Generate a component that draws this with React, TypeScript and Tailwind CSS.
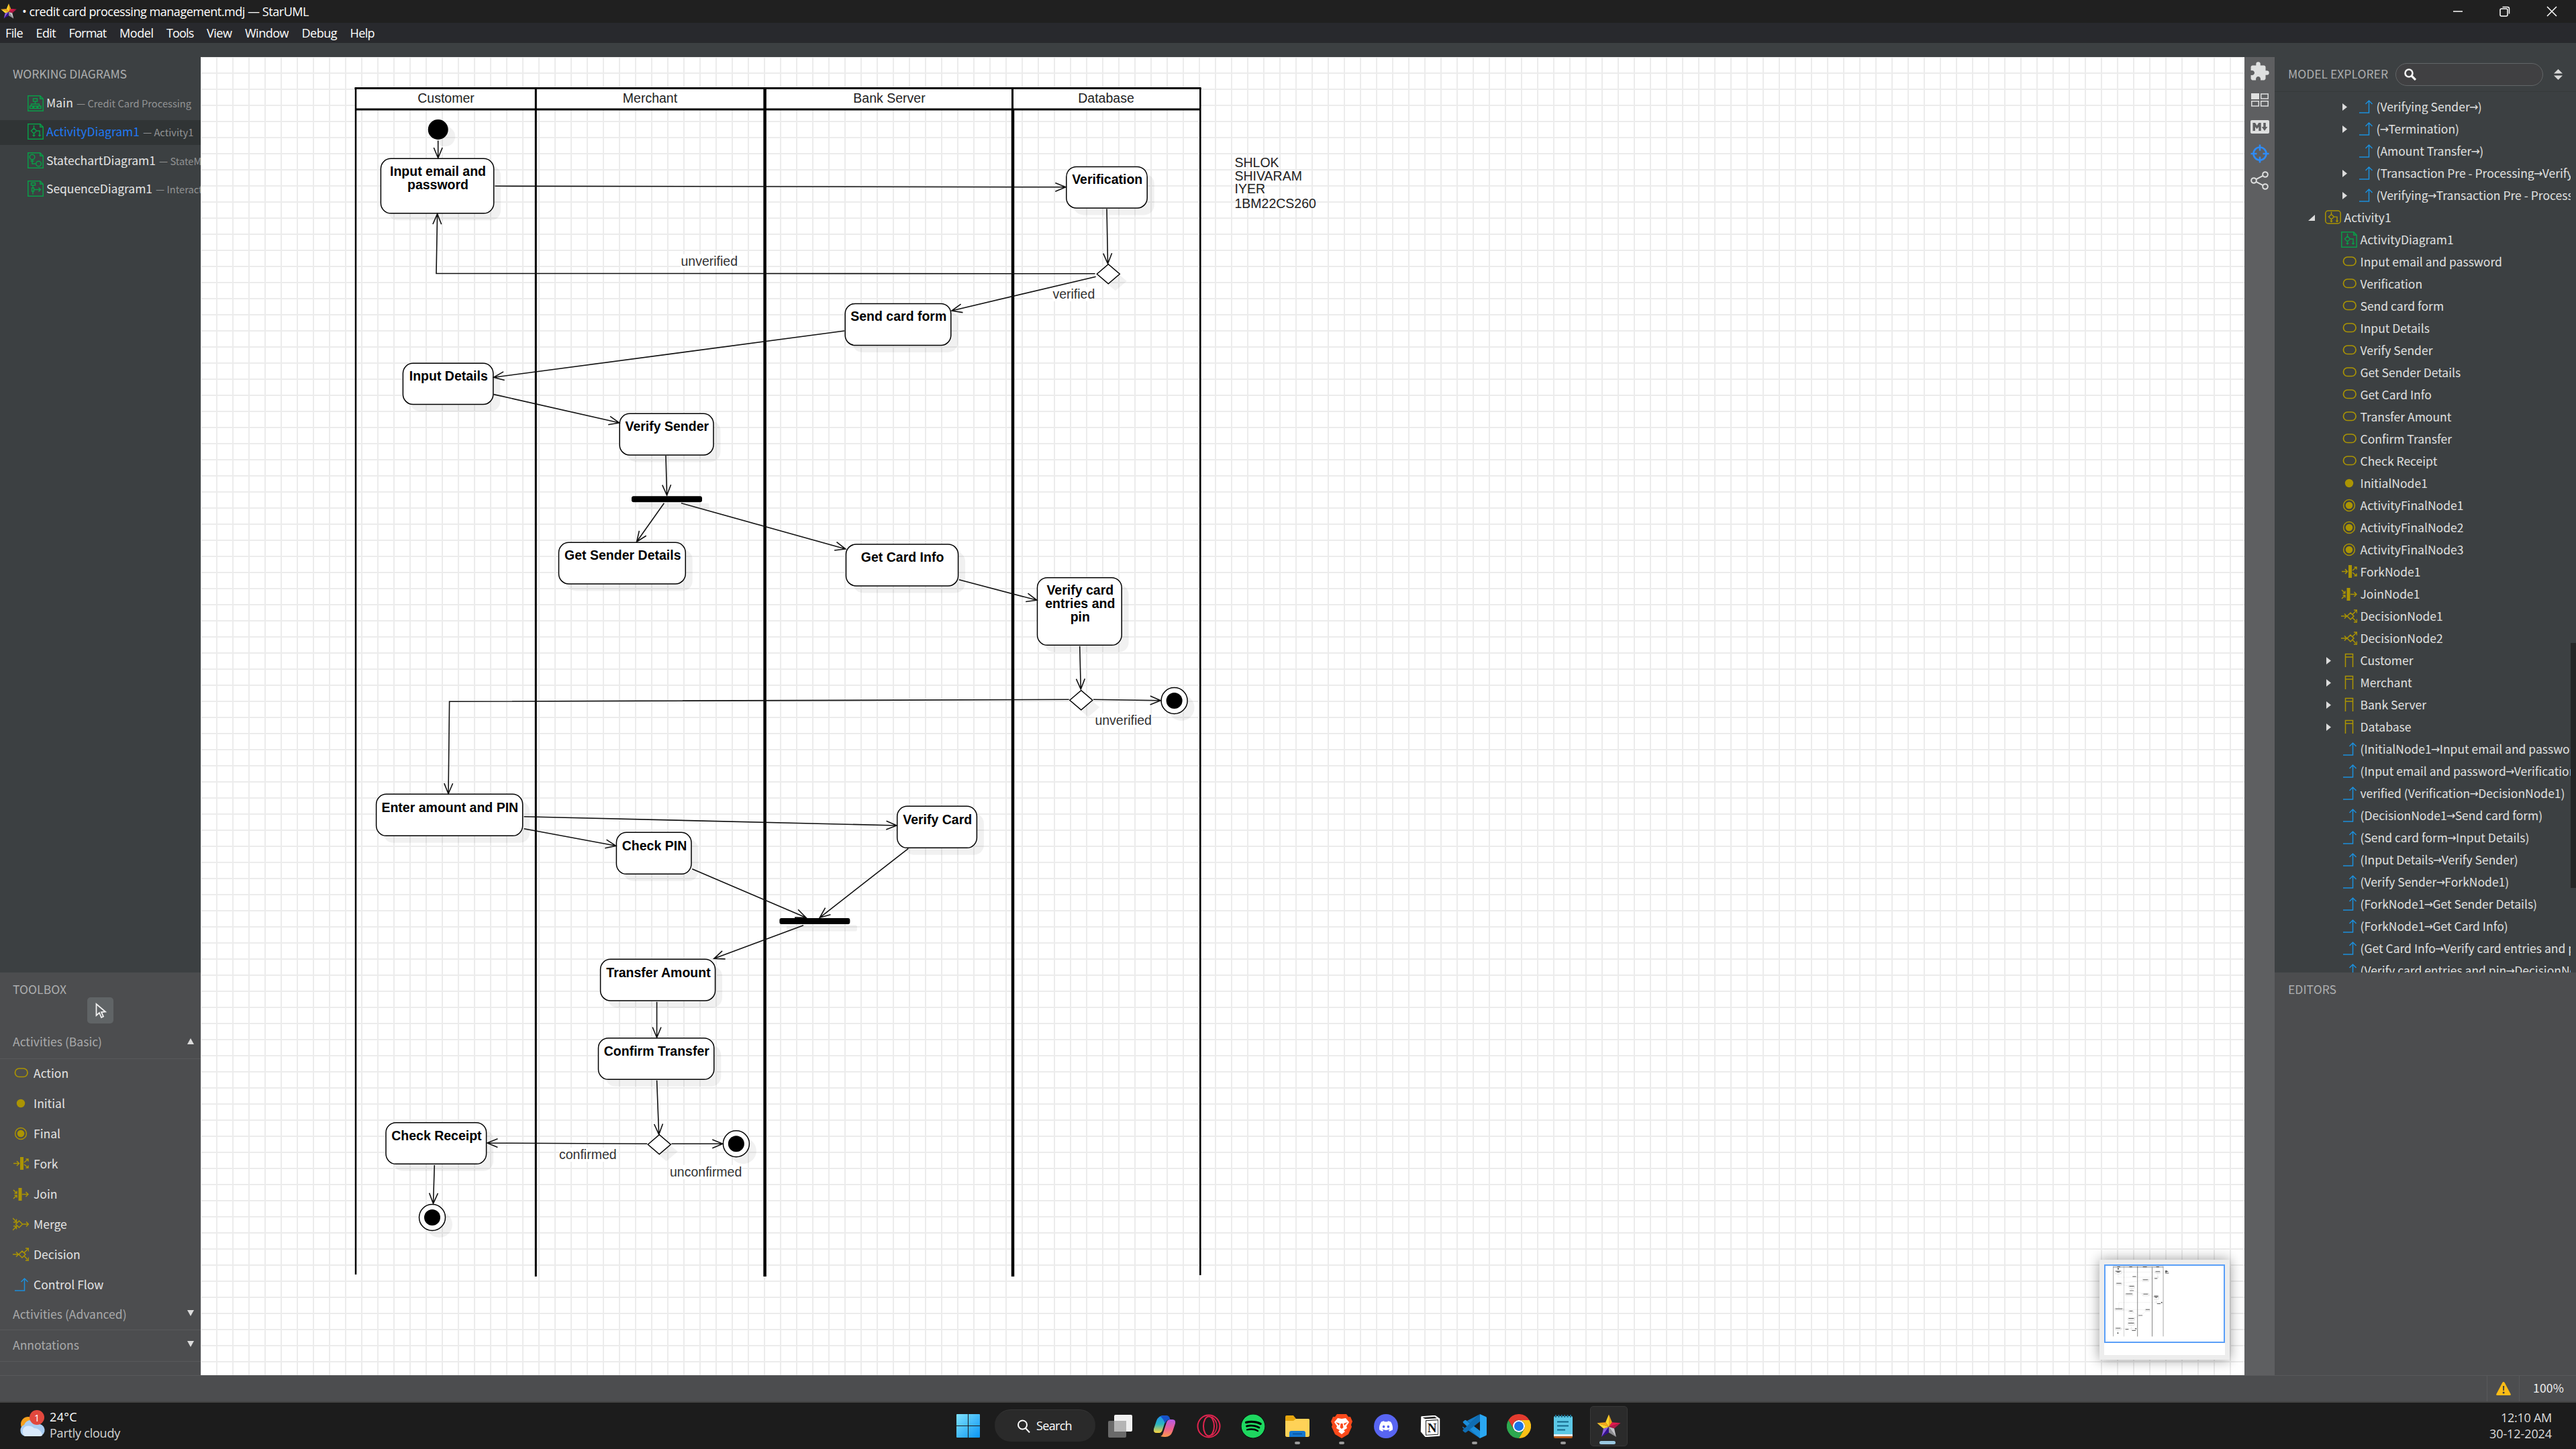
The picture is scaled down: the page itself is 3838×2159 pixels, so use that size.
import React, { useLayoutEffect, useRef, useState } from "react";
import { MdExtension } from "react-icons/md";
import { IoLogoMarkdown } from "react-icons/io";
import { FaDiscord, FaSpotify } from "react-icons/fa";

/* Text stretched to a fixed advance width through its letter spacing. */
function Fit({ w, children, className = "" }: { w: number; children: string; className?: string }) {
  const ref = useRef<HTMLSpanElement>(null);
  const [spacing, setSpacing] = useState(0);
  useLayoutEffect(() => {
    if (ref.current) setSpacing((w - ref.current.getBoundingClientRect().width) / children.length);
  }, [w, children]);
  return (
    <span ref={ref} className={"inline-block shrink-0 whitespace-nowrap " + className} style={{ letterSpacing: `${spacing}px` }}>
      {children}
    </span>
  );
}

const GOLD = "#ab9403";
const GREEN = "#0a9c48";
const BLUE = "#1b8fdc";

function ActivityGlyph() {
  return (
    <g fill="none" stroke="currentColor" strokeWidth="1.5">
      <path d="M9.5 3v4M9.5 7l4 4-4 4-4-4zM13.5 11h4.5v7M9.5 15v4" />
      <path d="M7 17h5l-2.500 3zM15.500 17h5l-2.500 3z" fill="currentColor" stroke="none" />
    </g>
  );
}

function Icon({ kind }: { kind: string }) {
  const line = { fill: "none", stroke: "currentColor", strokeWidth: 1.5 };
  const doc = <path d="M.8 .8h18l4.400 4.400v18H.8zM18.800 .8v4.400h4.400" {...line} />;
  let color = GOLD;
  let body: React.ReactNode = null;
  switch (kind) {
    case "class":
      color = GREEN;
      body = (
        <>
          {doc}
          <path d="M8.500 5h6v4h-6zM11.500 9v4M5.500 16v-3h12v3M3.500 16h4.500v3.500H3.500zM9.500 16H14v3.500H9.500zM15.500 16H20v3.500h-4.500z" {...line} />
        </>
      );
      break;
    case "activity":
      color = GREEN;
      body = (
        <>
          {doc}
          <ActivityGlyph />
        </>
      );
      break;
    case "state":
      color = GREEN;
      body = (
        <>
          {doc}
          <circle cx="7" cy="7" r="3.800" {...line} />
          <circle cx="16.500" cy="17" r="3.800" {...line} />
          <path d="M7 11v6h5.500M4.500 13h5" {...line} />
        </>
      );
      break;
    case "sequence":
      color = GREEN;
      body = (
        <>
          {doc}
          <path d="M5.500 3.500h6V7h-6zM8 7v4M6.500 11h3v5h-3zM8 16v4.500M9.500 13.500h10M16.500 10.500l3 3-3 3" {...line} />
        </>
      );
      break;
    case "activityRoot":
      body = (
        <>
          <rect x=".8" y="2" width="22.400" height="19" rx="4" {...line} />
          <g transform="translate(0 1) scale(1 .92)">
            <ActivityGlyph />
          </g>
        </>
      );
      break;
    case "action":
      body = <rect x="3.500" y="5" width="18.500" height="12.500" rx="6" {...line} strokeWidth={1.700} />;
      break;
    case "initial":
      body = <circle cx="12" cy="12" r="6.200" fill="currentColor" />;
      break;
    case "final":
      body = (
        <>
          <circle cx="12" cy="12" r="8.400" {...line} />
          <circle cx="12" cy="12" r="5.300" fill="currentColor" />
        </>
      );
      break;
    case "fork":
      body = (
        <>
          <rect x="11" y="2" width="5" height="19" fill="currentColor" />
          <path d="M1 11.500h8.500M6 8l3.500 3.500L6 15M17 10l6-5M19.500 5H23v3.500M17 13l6 5M19.500 18H23v-3.500" {...line} />
        </>
      );
      break;
    case "join":
      body = (
        <>
          <rect x="8.500" y="3" width="5" height="19" fill="currentColor" />
          <path d="M14 12.500h9M19.500 9l3.500 3.500-3.500 3.500M1 6l5 5M6 7.500V11H2.500M1 19l5-5M2.500 14H6v3.500" {...line} />
        </>
      );
      break;
    case "merge":
      body = <path d="M4.500 12l5-5 5 5-5 5zM14.500 12h9M20 8.500l3.500 3.500-3.500 3.500M0 3l6 6M5.500 4.500V9H1M0 21l6-6M1 15h4.500v4.500" {...line} />;
      break;
    case "decision":
      body = <path d="M9 12l5-5 5 5-5 5zM0 12h8.500M5 8.500L8.500 12 5 15.500M17 9.500l6.500-6.500M19 3h4.500v4.500M17 14.500l6.500 6.500M19 21h4.500v-4.500" {...line} />;
      break;
    case "lane":
      body = <path d="M6.500 22V2.500h11V22M6.500 7h11" {...line} />;
      break;
    case "flow":
      color = BLUE;
      body = <path d="M3 21h14.500V3.500M12.500 8l5-5 5 5" {...line} />;
      break;
  }
  return (
    <svg viewBox="0 0 24 24" className="size-6 shrink-0" style={{ color }}>
      {body}
    </svg>
  );
}

function StarLogo({ className }: { className: string }) {
  function pt(deg: number, r: number) {
    const a = (deg * Math.PI) / 180;
    return `${(18 + r * Math.sin(a)).toFixed(1)},${(19 - r * Math.cos(a)).toFixed(1)}`;
  }
  const outer = [0, 1, 2, 3, 4].map((i) => pt(i * 72, 18.5));
  const inner = [0, 1, 2, 3, 4].map((i) => pt(i * 72 + 36, 8.4));
  const right = ["#e8a21c", "#b01c48", "#8e8e92", "#8a5ce0", "#f9a81c"];
  const left = ["#fed62a", "#e3174f", "#c4c4c8", "#34108c", "#fdd835"];
  return (
    <svg viewBox="0 0 36 36" className={className}>
      {outer.map((o, i) => (
        <g key={i}>
          <polygon points={`18,19 ${o} ${inner[i]}`} fill={right[i]} />
          <polygon points={`18,19 ${o} ${inner[(i + 4) % 5]}`} fill={left[i]} />
        </g>
      ))}
    </svg>
  );
}

/* ---------- Title and menu bars ---------- */

function TitleBar() {
  return (
    <div className="flex h-[34px] shrink-0 items-center bg-[#202020] font-['Open_Sans',sans-serif] text-[18px] text-white">
      <StarLogo className="ml-px size-6" />
      <Fit w={427} className="ml-[8px]">• credit card processing management.mdj — StarUML</Fit>
      <div className="ml-auto flex items-center gap-[54px] pr-[28px]">
        <svg viewBox="0 0 16 16" className="size-4" stroke="#fff" strokeWidth="1.5" fill="none">
          <path d="M1 8h14" />
        </svg>
        <svg viewBox="0 0 16 16" className="size-4" stroke="#fff" strokeWidth="1.5" fill="none">
          <rect x="1" y="4" width="11" height="11" rx="2" />
          <path d="M4.500 1.500H12q2.500 0 2.500 2.500v7.500" />
        </svg>
        <svg viewBox="0 0 16 16" className="size-4" stroke="#fff" strokeWidth="1.5" fill="none">
          <path d="M1 1l14 14M15 1L1 15" />
        </svg>
      </div>
    </div>
  );
}

const MENUS: [string, number][] = [
  ["File", 26], ["Edit", 29.5], ["Format", 56], ["Model", 50.500], ["Tools", 40.500],
  ["View", 37.500], ["Window", 65], ["Debug", 52.500], ["Help", 36.500],
];

function MenuBar() {
  return (
    <div className="flex h-[30px] shrink-0 items-center gap-[19.5px] bg-[#28292d] pb-px pl-[8px] font-['Open_Sans',sans-serif] text-[18px] leading-none text-white">
      {MENUS.map(([m, w]) => (
        <Fit key={m} w={w}>{m}</Fit>
      ))}
    </div>
  );
}

/* ---------- Left side ---------- */

const DIAGRAMS = [
  { kind: "class", name: "Main", w: 40, owner: "— Credit Card Processing" },
  { kind: "activity", name: "ActivityDiagram1", w: 139, owner: "— Activity1", active: true },
  { kind: "state", name: "StatechartDiagram1", w: 163, owner: "— StateMachine1" },
  { kind: "sequence", name: "SequenceDiagram1", w: 158, owner: "— Interaction1" },
];

function WorkingDiagrams() {
  return (
    <div className="h-[1364px] shrink-0 overflow-hidden bg-[#3c4042]">
      <div className="flex h-[51px] items-center pl-[19px] text-[17.5px] text-[#adaeaf]">
        <Fit w={170}>WORKING DIAGRAMS</Fit>
      </div>
      <div className="flex flex-col gap-[5.6px]">
        {DIAGRAMS.map((d) => (
          <div
            key={d.name}
            className={
              "flex h-[37px] items-center overflow-hidden pb-[2px] pl-[41px] whitespace-nowrap " +
              (d.active ? "bg-[#303435] text-[#2079f4]" : "text-[#e4e4e4]")
            }
          >
            <Icon kind={d.kind} />
            <Fit w={d.w} className="ml-[4px]">{d.name}</Fit>
            <span className="ml-[5px] pt-[2px] text-[14.700px] text-[#929394]">{d.owner}</span>
          </div>
        ))}
      </div>
    </div>
  );
}

const TOOLS = [
  ["action", "Action"], ["initial", "Initial"], ["final", "Final"], ["fork", "Fork"],
  ["join", "Join"], ["merge", "Merge"], ["decision", "Decision"], ["flow", "Control Flow"],
];

function ToolGroup({ title, open, className }: { title: string; open?: boolean; className: string }) {
  return (
    <div className={"flex shrink-0 items-center justify-between border-b border-[#58595b] pr-[10px] pb-[2px] pl-[19px] text-[#a9aaab] " + className}>
      <span>{title}</span>
      <svg viewBox="0 0 10 9" className="mb-[3px] h-[9px] w-[10px]" fill="#dcdcdc">
        <path d={open ? "M0 9L5 0l5 9z" : "M0 0l5 9 5-9z"} />
      </svg>
    </div>
  );
}

function Toolbox() {
  return (
    <div className="flex flex-1 flex-col bg-[#4c4d4f] text-[17.5px]">
      <div className="flex h-[37px] shrink-0 items-center pt-[13px] pl-[19px] text-[#adaeaf]">
        <Fit w={80}>TOOLBOX</Fit>
      </div>
      <div className="mx-auto flex h-[39px] w-[39px] shrink-0 items-center justify-center rounded-[5px] bg-[#606466]">
        <svg viewBox="0 0 18 24" className="h-6 w-[18px]" fill="none" stroke="#efefef" strokeWidth="1.800">
          <path d="M2.500 2v17l4.500-4 3 7 3-1.500-3-6.500 6-.5z" />
        </svg>
      </div>
      <ToolGroup title="Activities (Basic)" open className="mt-[5px] h-[48px]" />
      {TOOLS.map(([kind, label]) => (
        <div key={label} className="flex h-[44.9px] shrink-0 items-center gap-[7px] pb-[2px] pl-[19px] text-[#e4e4e4]">
          <Icon kind={kind} />
          <span>{label}</span>
        </div>
      ))}
      <ToolGroup title="Activities (Advanced)" className="h-[45px]" />
      <ToolGroup title="Annotations" className="h-[47px]" />
    </div>
  );
}

/* ---------- Diagram ---------- */

type Box = { x1: number; y1: number; x2: number; y2: number; cx: number; lines: [string, number][] };
const BOXES: Box[] = [
  { x1: 567.4, y1: 236.3, x2: 735.7, y2: 317.8, cx: 652.5, lines: [["Input email and", 262], ["password", 281.8]] },
  { x1: 600.4, y1: 541.3, x2: 734.8, y2: 602.5, cx: 668.3, lines: [["Input Details", 567]] },
  { x1: 923.2, y1: 616.3, x2: 1063, y2: 678, cx: 993.8, lines: [["Verify Sender", 642]] },
  { x1: 1588.8, y1: 248.4, x2: 1709.2, y2: 310, cx: 1649.7, lines: [["Verification", 274.3]] },
  { x1: 1259.2, y1: 452.4, x2: 1416.8, y2: 514.5, cx: 1338.8, lines: [["Send card form", 478.3]] },
  { x1: 832.5, y1: 808.3, x2: 1021.3, y2: 870, cx: 927.8, lines: [["Get Sender Details", 834.3]] },
  { x1: 1260.5, y1: 811, x2: 1427.6, y2: 873, cx: 1344.6, lines: [["Get Card Info", 837.3]] },
  { x1: 1545.5, y1: 860.7, x2: 1671.2, y2: 961.3, cx: 1609.3, lines: [["Verify card", 886.3], ["entries and", 906], ["pin", 925.5]] },
  { x1: 560.6, y1: 1183.3, x2: 778.7, y2: 1245.3, cx: 670.3, lines: [["Enter amount and PIN", 1209.7]] },
  { x1: 1336.7, y1: 1201.3, x2: 1455.4, y2: 1263.3, cx: 1396.7, lines: [["Verify Card", 1228]] },
  { x1: 918.4, y1: 1240.3, x2: 1030, y2: 1302.3, cx: 975, lines: [["Check PIN", 1266.7]] },
  { x1: 894.6, y1: 1429.3, x2: 1065.6, y2: 1491, cx: 981, lines: [["Transfer Amount", 1455.7]] },
  { x1: 891.5, y1: 1546.7, x2: 1063.8, y2: 1608.3, cx: 978.3, lines: [["Confirm Transfer", 1572.7]] },
  { x1: 575, y1: 1672.7, x2: 724.6, y2: 1734.3, cx: 650.4, lines: [["Check Receipt", 1699]] },
];

const FLOWS: [number, number][][] = [
  [[652.7, 209.5], [652.7, 235.5]],
  [[737.5, 277.3], [1587.8, 278.8]],
  [[1631.6, 407.8], [650, 407.4], [651.6, 318.6]],
  [[1649, 311.3], [1650.5, 393]],
  [[1632.7, 412.2], [1417.9, 463]],
  [[1258.2, 493], [735.5, 562.3]],
  [[735.5, 587.6], [922.8, 630]],
  [[992, 679], [993.6, 738]],
  [[989.4, 749.7], [948.6, 807.3]],
  [[1015, 749.7], [1259.8, 818]],
  [[1428.8, 863.7], [1544.9, 894.3]],
  [[1608.7, 962.7], [1610.3, 1027]],
  [[1629, 1042.3], [1729.2, 1043.7]],
  [[1592.7, 1042.3], [669.6, 1045.3], [668, 1182.7]],
  [[780.6, 1216.7], [1336, 1230]],
  [[780.6, 1234.7], [917.7, 1260.3]],
  [[1031.3, 1294.7], [1200.9, 1367.3]],
  [[1353.3, 1264.3], [1221.3, 1367.3]],
  [[1197, 1378.7], [1063.8, 1428.3]],
  [[978.6, 1492.7], [978.6, 1546]],
  [[978.6, 1609.7], [981.7, 1690.3]],
  [[1000.4, 1704.3], [1076.8, 1704.3]],
  [[964.3, 1704.3], [725.9, 1703]],
  [[647.3, 1736], [645.5, 1793.3]],
];

const LABELS: [string, number, number, number][] = [
  ["unverified", 1014.5, 395.9, 84],
  ["verified", 1568.4, 444.8, 62],
  ["unverified", 1631.4, 1080.3, 84],
  ["confirmed", 833, 1727, 86],
  ["unconfirmed", 998, 1753, 107],
];

const LANES: [string, number][] = [["Customer", 664.5], ["Merchant", 968.5], ["Bank Server", 1325], ["Database", 1648]];
const NOTE: [string, number][] = [["SHLOK", 249.3], ["SHIVARAM", 268.7], ["IYER", 288.3], ["1BM22CS260", 310]];
const DIAMONDS: [number, number][] = [[1651.3, 408.2], [1610.8, 1043.2], [982.3, 1705.2]];
const FINALS: [number, number][] = [[1749.6, 1044], [1096.9, 1704.3], [644, 1814]];
const BARS: [number, number][] = [[941, 739.3], [1161.4, 1368]];

function arrowPath(pts: [number, number][]) {
  const [x, y] = pts[pts.length - 1];
  const [px, py] = pts[pts.length - 2];
  const a = Math.atan2(y - py, x - px);
  const wing = (d: number) => `${(x - 16.8 * Math.cos(a + d)).toFixed(1)} ${(y - 16.8 * Math.sin(a + d)).toFixed(1)}`;
  return `M${pts.map((p) => p.join(" ")).join("L")}M${wing(0.39)}L${x} ${y}L${wing(-0.39)}`;
}

function Words({ x, y, text, mini, bold, middle, fill = "#000" }: { x: number; y: number; text: string; mini?: boolean; bold?: boolean; middle?: boolean; fill?: string }) {
  if (mini) {
    const w = text.length * 9;
    return <rect x={middle ? x - w / 2 : x} y={y - 12} width={w} height={13} fill="#222" />;
  }
  return (
    <text x={x} y={y} fontSize="19.5" fontWeight={bold ? 700 : 400} textAnchor={middle ? "middle" : "start"} fill={fill}>
      {text}
    </text>
  );
}

function Diagram({ className, mini }: { className: string; mini?: boolean }) {
  return (
    <svg viewBox="299 85 3045 1964" preserveAspectRatio="xMidYMin meet" className={className} fontFamily="'Liberation Sans', Arial, sans-serif">
      <rect x="530" y="131" width="1258" height="32" fill={mini ? "#ddd" : "#fff"} />
      <g stroke="#000" fill="none" strokeWidth="3">
        <path d="M528.500 131.500H1789.500M530 163H1788" />
        <path d="M530 131V1899M1788.300 131V1900" strokeWidth={mini ? 6 : 2.500} />
        <path d="M798.300 131V1902M1508.500 131V163" />
        <path d="M1139.600 131V1902M1509 163V1902" strokeWidth={mini ? 8 : 4.500} />
      </g>
      {LANES.map(([t, x]) => (
        <Words key={t} x={x} y={152.8} text={t} mini={mini} middle fill="#222" />
      ))}

      <g fill="#000" fillOpacity=".055">
        <circle cx="663.200" cy="203.300" r="15" />
        {BOXES.map((b) => (
          <rect key={b.cx + b.y1} x={b.x1 + 10.5} y={b.y1 + 10.5} width={b.x2 - b.x1} height={b.y2 - b.y1} rx="15" />
        ))}
        {DIAMONDS.map(([x, y]) => (
          <path key={y} d={`M${x - 6.5} ${y + 10.5}l17-14.500 17 14.500-17 14.500z`} />
        ))}
        {FINALS.map(([x, y]) => (
          <circle key={y} cx={x + 10.5} cy={y + 10.5} r="19.500" />
        ))}
        {BARS.map(([x, y]) => (
          <rect key={x} x={x + 10.5} y={y + 10.5} width="105" height="9" rx="2" />
        ))}
      </g>

      <circle cx="652.700" cy="193" r="15" />
      {BOXES.map((b) => (
        <rect key={b.cx + b.y1} x={b.x1} y={b.y1} width={b.x2 - b.x1} height={b.y2 - b.y1} rx="15" fill="#fff" stroke="#000" strokeWidth="1.500" />
      ))}
      {BOXES.map((b) => b.lines.map(([t, y]) => <Words key={t + y} x={b.cx} y={y} text={t} mini={mini} bold middle />))}
      {DIAMONDS.map(([x, y]) => (
        <path key={y} d={`M${x - 17} ${y}l17-14.500 17 14.500-17 14.500z`} fill="#fff" stroke="#000" strokeWidth="1.500" />
      ))}
      {FINALS.map(([x, y]) => (
        <g key={y}>
          <circle cx={x} cy={y} r="19.500" fill="#fff" stroke="#000" strokeWidth="1.500" />
          <circle cx={x} cy={y} r="12" />
        </g>
      ))}
      {BARS.map(([x, y]) => (
        <rect key={x} x={x} y={y} width="105" height="9" rx="3" />
      ))}
      {LABELS.map(([t, x, y, w]) => (
        <g key={x}>
          <rect x={x} y={y - 17} width={w} height="21" fill="#fff" />
          <Words x={x} y={y} text={t} mini={mini} fill="#333" />
        </g>
      ))}
      {FLOWS.map((f, i) => (
        <path key={i} d={arrowPath(f)} fill="none" stroke={mini ? "#777" : "#111"} strokeWidth="1.600" />
      ))}
      {NOTE.map(([t, y]) => (
        <Words key={t} x={1839.5} y={y} text={t} mini={mini} fill="#222" />
      ))}
    </svg>
  );
}

function Canvas() {
  return (
    <div className="relative h-[1964px] w-[3045px] shrink-0 overflow-hidden bg-white bg-[linear-gradient(to_right,#ececec_2px,transparent_2px),linear-gradient(to_bottom,#ececec_2px,transparent_2px)] bg-[length:24px_24px] bg-[position:-1px_-1px]">
      <Diagram className="block h-[1964px] w-[3045px]" />
      <div className="absolute right-[22px] bottom-[23px] h-[149px] w-[194px] bg-[#ededed] px-[7px] py-[7px] shadow-[0_0_18px_rgba(0,0,0,0.4)]">
        <div className="h-[135px] bg-white">
          <div className="h-[117px] border-2 border-[#5a9ff8]">
            <Diagram mini className="-mt-0.5 -ml-0.5 block h-[117px] w-[180px] max-w-none" />
          </div>
        </div>
      </div>
    </div>
  );
}

/* ---------- Right side ---------- */

function ViewStrip() {
  return (
    <div className="flex w-[45px] shrink-0 flex-col items-center bg-[#5e5f61] pt-[6px] text-[#dfe0e0]">
      <MdExtension className="size-[31px]" />
      <svg viewBox="0 0 26 20" className="mt-[17px] h-5 w-[26px]" fill="none" stroke="currentColor" strokeWidth="1.500">
        <path d="M0 0h12v9H0z" fill="currentColor" stroke="none" />
        <path d="M14.700 1h10.500v7H14.700zM.8 11.700h10.500v7.300H.8zM14.700 11.700h10.500v7.300H14.700z" />
      </svg>
      <IoLogoMarkdown className="mt-[14px] size-[32px]" />
      <svg viewBox="0 0 28 28" className="mt-[10px] size-[28px]" fill="none" stroke="#2f8bf5" strokeWidth="2.600">
        <circle cx="14" cy="14" r="9.500" />
        <path d="M14 .5v9M14 18.500v9M.5 14h9M18.500 14h9" />
      </svg>
      <svg viewBox="0 0 27 28" className="mt-[12px] h-[28px] w-[27px]" fill="none" stroke="currentColor" strokeWidth="2">
        <circle cx="5" cy="14" r="3.800" />
        <circle cx="22" cy="5" r="3.800" />
        <circle cx="22" cy="23" r="3.800" />
        <path d="M8.400 12.200L18.600 6.800M8.400 15.800l10.200 5.400" />
      </svg>
    </div>
  );
}

type Row = { kind: string; text: string; level: number; tri?: "closed" | "open" };
const n = (kind: string, text: string, level = 2, tri?: "closed" | "open"): Row => ({ kind, text, level, tri });
const TREE: Row[] = [
  n("flow", "", 3),
  n("flow", "(Verifying Sender→)", 3, "closed"),
  n("flow", "(→Termination)", 3, "closed"),
  n("flow", "(Amount Transfer→)", 3),
  n("flow", "(Transaction Pre - Processing→Verifying)", 3, "closed"),
  n("flow", "(Verifying→Transaction Pre - Processing)", 3, "closed"),
  n("activityRoot", "Activity1", 1, "open"),
  n("activity", "ActivityDiagram1"),
  n("action", "Input email and password"),
  n("action", "Verification"),
  n("action", "Send card form"),
  n("action", "Input Details"),
  n("action", "Verify Sender"),
  n("action", "Get Sender Details"),
  n("action", "Get Card Info"),
  n("action", "Transfer Amount"),
  n("action", "Confirm Transfer"),
  n("action", "Check Receipt"),
  n("initial", "InitialNode1"),
  n("final", "ActivityFinalNode1"),
  n("final", "ActivityFinalNode2"),
  n("final", "ActivityFinalNode3"),
  n("fork", "ForkNode1"),
  n("join", "JoinNode1"),
  n("decision", "DecisionNode1"),
  n("decision", "DecisionNode2"),
  n("lane", "Customer", 2, "closed"),
  n("lane", "Merchant", 2, "closed"),
  n("lane", "Bank Server", 2, "closed"),
  n("lane", "Database", 2, "closed"),
  n("flow", "(InitialNode1→Input email and password)"),
  n("flow", "(Input email and password→Verification)"),
  n("flow", "verified (Verification→DecisionNode1)"),
  n("flow", "(DecisionNode1→Send card form)"),
  n("flow", "(Send card form→Input Details)"),
  n("flow", "(Input Details→Verify Sender)"),
  n("flow", "(Verify Sender→ForkNode1)"),
  n("flow", "(ForkNode1→Get Sender Details)"),
  n("flow", "(ForkNode1→Get Card Info)"),
  n("flow", "(Get Card Info→Verify card entries and pin)"),
  n("flow", "(Verify card entries and pin→DecisionNode2)"),
];
const PAD: Record<number, string> = { 1: "pl-[47px]", 2: "pl-[71px]", 3: "pl-[95px]" };

function TreeText({ text }: { text: string }) {
  const [a, b] = text.split("→");
  return (
    <span className="ml-[4.500px] flex items-center">
      {a}
      {b !== undefined && (
        <span className="mt-[2px] flex w-[12px] justify-center font-['DejaVu_Sans',sans-serif] text-[16px] leading-none">→</span>
      )}
      {b}
    </span>
  );
}

function Tree() {
  return (
    <div className="flex h-[1313px] shrink-0 overflow-hidden border-t border-[#363a3b] bg-[#3c4042]">
      <div className="-mt-[27.500px] w-[441px] overflow-hidden">
        {TREE.map((r, i) => (
          <div key={i} className={"flex h-[33px] items-center text-[17.5px] whitespace-pre text-[#e0e0e0] " + PAD[r.level]}>
            <svg viewBox="0 0 28 16" className="h-4 w-[28px] shrink-0" fill="#dcdcdc">
              {r.tri === "closed" && <path d="M6 3v11l7-5.500z" />}
              {r.tri === "open" && <path d="M3 13h10V4z" />}
            </svg>
            <Icon kind={r.kind} />
            {r.text && <TreeText text={r.text} />}
          </div>
        ))}
      </div>
      <div className="mt-[821px] ml-auto h-[365px] w-2 shrink-0 bg-[#262626]" />
    </div>
  );
}

function RightPanel() {
  return (
    <div className="flex flex-1 flex-col overflow-hidden">
      <div className="flex h-[51px] shrink-0 items-center bg-[#3c4042] pl-[20px]">
        <Fit w={149} className="text-[17.5px] text-[#adaeaf]">MODEL EXPLORER</Fit>
        <div className="ml-[11px] flex h-[34px] w-[220px] items-center rounded-full border-[1.500px] border-[#626567] bg-[#404042] pl-[12px]">
          <svg viewBox="0 0 18 18" className="size-[18px]" fill="none" stroke="#f4f4f4">
            <circle cx="7" cy="7" r="5.500" strokeWidth="2.600" />
            <path d="M11 11l6 6" strokeWidth="3.200" />
          </svg>
        </div>
        <svg viewBox="0 0 13 16" className="ml-[16px] h-4 w-[13px]" fill="#d8d8d8">
          <path d="M0 6.500L6.500 0 13 6.500zM0 9.500h13L6.500 16z" />
        </svg>
      </div>
      <Tree />
      <div className="flex-1 bg-[#4c4d4f] pt-[12px] pl-[20px] text-[17.5px] leading-[26px] text-[#adaeaf]">
        <Fit w={72}>EDITORS</Fit>
      </div>
    </div>
  );
}

/* ---------- Bottom bars ---------- */

function StatusBar() {
  return (
    <div className="flex h-[41px] shrink-0 items-stretch justify-end border-t border-b-2 border-t-[#58595b] border-b-[#434343] bg-[#4c4d4f]">
      <div className="flex w-[49px] items-center justify-center border-x border-[#58595b]">
        <svg viewBox="0 0 22 20" className="h-5 w-[22px]">
          <path d="M11 0q1 0 1.600 1l9 17q.8 2-1.200 2H1.600Q-.4 20 .4 18l9-17Q10 0 11 0z" fill="#fbbc16" />
          <path d="M10 6h2.200l-.3 7h-1.600z" fill="#3f3f3f" />
          <circle cx="11.100" cy="16" r="1.500" fill="#3f3f3f" />
        </svg>
      </div>
      <div className="flex w-[84px] items-center pb-px pl-[20px] text-[17.5px] text-[#efefef]">
        <Fit w={46}>100%</Fit>
      </div>
    </div>
  );
}

function Slot({ children, dot }: { children: React.ReactNode; dot?: boolean }) {
  return (
    <div className="relative flex h-full w-[66px] shrink-0 items-center justify-center">
      {children}
      {dot && <span className="absolute bottom-[7px] left-[29px] h-1 w-2 rounded-full bg-[#9a9a9a]" />}
    </div>
  );
}

function Chrome() {
  const wedge = "M-15.600-9A18 18 0 0 1 15.600-9L0-9A9 9 0 0 0-7.800 4.500Z";
  return (
    <svg viewBox="-18 -18 36 36" className="size-9">
      <path d={wedge} fill="#e33b2e" />
      <path d={wedge} fill="#fbc116" transform="rotate(120)" />
      <path d={wedge} fill="#2da94f" transform="rotate(240)" />
      <circle r="9" fill="#fff" />
      <circle r="7" fill="#1a73e8" />
    </svg>
  );
}

function Taskbar() {
  return (
    <div className="relative flex h-[69px] shrink-0 items-stretch bg-[#1c1c1c] font-['Open_Sans',sans-serif] text-[18px] text-white">
      <div className="flex w-[1409px] items-center pb-[3px] pl-[25px]">
        <svg viewBox="0 0 46 46" className="size-[46px]">
          <circle cx="17" cy="22" r="11" fill="#f5a01d" />
          <path d="M12 40a9 9 0 0 1-1-17 11 11 0 0 1 20-1 9 9 0 0 1 3 18z" fill="#a9cdf2" />
          <path d="M12 40a9 9 0 0 1 0-14 12 12 0 0 1 14 2 12 12 0 0 1 12 11l-3 1z" fill="#d9e9fb" />
          <circle cx="30" cy="12" r="11" fill="#e2483d" />
          <text x="30" y="17.500" fontSize="14" textAnchor="middle" fill="#fff">1</text>
        </svg>
        <div className="ml-[3px] flex flex-col items-start leading-[24px]">
          <Fit w={41}>24°C</Fit>
          <Fit w={105} className="text-[#d5d5d5]">Partly cloudy</Fit>
        </div>
      </div>
      <Slot>
        <svg viewBox="0 0 34 34" className="size-[35px]">
          <defs>
            <linearGradient id="win" x1="0" y1="0" x2="1" y2="1">
              <stop offset="0" stopColor="#7fe3ff" />
              <stop offset="1" stopColor="#0a94f5" />
            </linearGradient>
          </defs>
          <path d="M0 1q0-1 1-1h15.500v16.500H0zM17.500 0H33q1 0 1 1v15.500H17.500zM0 17.500h16.500V34H1q-1 0-1-1zM17.500 17.500H34V33q0 1-1 1H17.500z" fill="url(#win)" />
        </svg>
      </Slot>
      <div className="mt-[10px] mr-[4px] ml-[7px] flex h-[48px] w-[150px] items-center rounded-full border-t border-[#363636] bg-[#2a2a2a] pl-[33px]">
        <svg viewBox="0 0 20 20" className="size-5" fill="none" stroke="#fff" strokeWidth="2">
          <circle cx="8.500" cy="8" r="6.500" />
          <path d="M13 13l6 6.500" />
        </svg>
        <Fit w={53} className="ml-[9px]">Search</Fit>
      </div>
      <Slot>
        <svg viewBox="0 0 36 36" className="size-9">
          <rect x="0" y="10" width="27" height="25" rx="2" fill="#6a6a6a" />
          <rect x="9" y="1" width="27" height="25" rx="2" fill="#f0f0f0" />
          <rect x="9" y="10" width="18" height="16" fill="#b5b5b5" />
        </svg>
      </Slot>
      <Slot>
        <svg viewBox="0 0 36 36" className="size-9">
          <defs>
            <linearGradient id="cpa" x1="0" y1="0" x2="0" y2="1">
              <stop offset="0" stopColor="#1d8cf0" />
              <stop offset=".5" stopColor="#2bb6c0" />
              <stop offset="1" stopColor="#ffd43b" />
            </linearGradient>
            <linearGradient id="cpb" x1="0" y1="0" x2="0" y2="1">
              <stop offset="0" stopColor="#b45be8" />
              <stop offset=".55" stopColor="#ee5f8f" />
              <stop offset="1" stopColor="#ff9b4a" />
            </linearGradient>
          </defs>
          <path d="M24 3q-3-1-7-1-8 0-11 8L2 22q-1 6 4 6h4q4 0 5.500-6L20 8q1-4 4-5z" fill="url(#cpa)" />
          <path d="M12 33q3 1 7 1 8 0 11-8l4-12q1-6-4-6h-4q-4 0-5.500 6L16 28q-1 4-4 5z" fill="url(#cpb)" />
          <path d="M17 2q6-.5 8 2l1.500 4q-5 0-6.500 4l-1 2Q17 8 12 3z" fill="#1652c9" />
        </svg>
      </Slot>
      <Slot>
        <svg viewBox="0 0 36 36" className="size-9" fill="none" stroke="#e2244f">
          <circle cx="18" cy="18" r="16.500" strokeWidth="2" />
          <ellipse cx="18" cy="18" rx="8" ry="14.500" strokeWidth="2" />
          <path d="M22 4q8 5 8 14t-8 14" strokeWidth="1.500" />
        </svg>
      </Slot>
      <Slot><FaSpotify className="size-9 rounded-full bg-black text-[#1ed760]" /></Slot>
      <Slot dot>
        <svg viewBox="0 0 36 34" className="h-[34px] w-9">
          <path d="M0 3q0-2 2-2h10l4 5h18q2 0 2 2v22q0 3-3 3H3q-3 0-3-3z" fill="#e5a50e" />
          <path d="M0 9h12l4-3h18q2 0 2 2v22q0 3-3 3H3q-3 0-3-3z" fill="#ffd257" />
          <path d="M6 33v-6q0-3 3-3h18q3 0 3 3v6z" fill="#1577cf" />
          <path d="M11 28.500h14" stroke="#0b4f96" strokeWidth="1.500" />
        </svg>
      </Slot>
      <Slot dot>
        <svg viewBox="0 0 32 36" className="h-9 w-8">
          <path d="M9 0h14l3 4h3l3 7-2 5 1 3-5 11-10 6-10-6L1 19l1-3-2-5 3-7h3z" fill="#fb4a1b" />
          <path d="M10 6l6 1 6-1 5 6-4 6 1 3-5 3 2 2-5 4-5-4 2-2-5-3 1-3-4-6z" fill="#fff" />
          <path d="M7 12l6 2-1 3zM25 12l-6 2 1 3zM14.500 14h3l1 6-2.500 2-2.500-2z" fill="#fb4a1b" />
        </svg>
      </Slot>
      <Slot>
        <span className="flex size-9 items-center justify-center rounded-full bg-[#5865f2]">
          <FaDiscord className="size-[22px]" />
        </span>
      </Slot>
      <Slot>
        <svg viewBox="0 0 30 32" className="h-8 w-[30px]">
          <path d="M2 2l20-1.500L28.500 5v25L8 31.500 1.500 24z" fill="#fff" stroke="#fff" strokeWidth="1.500" strokeLinejoin="round" />
          <path d="M3.500 3l18-1.300L25 4.200 7.500 5.300zM8 7.300l18.800-1.200v22.700L8 29.800z" fill="#222" />
          <path d="M9 8.200l17-1v20.600l-17 1z" fill="#fff" />
          <text x="17.500" y="25" fontSize="19" fontWeight="700" textAnchor="middle" fill="#111" fontFamily="'Liberation Serif', serif">N</text>
        </svg>
      </Slot>
      <Slot dot>
        <svg viewBox="0 0 36 36" className="size-9">
          <path d="M26 0l-20 19-4 3-2-2v-1.500L26 36l1-10-19-15-3-1.500L1 11.500v1.500z" fill="#1379c4" />
          <path d="M26 36L1 13l-.5-1.500 3-2.500h1.500L26 25z" fill="#1b8edb" />
          <path d="M26 0L.5 23.500v1.500l3 2.500H5L26 11z" fill="#0f6db3" />
          <path d="M26 0l9 4q1 .5 1 2v24q0 1.500-1 2l-9 4z" fill="#2aa7f2" />
        </svg>
      </Slot>
      <Slot><Chrome /></Slot>
      <Slot dot>
        <svg viewBox="0 0 28 36" className="h-9 w-7">
          <rect x="0" y="3" width="28" height="30" rx="2" fill="#5cc8e6" />
          <path d="M0 30h28v4q0 2-2 2H2q-2 0-2-2z" fill="#b45a1c" />
          <path d="M0 30h28v3H0z" fill="#e8eef2" />
          <path d="M3 1v4M7.400 1v4M11.800 1v4M16.200 1v4M20.600 1v4M25 1v4" stroke="#1d6d8c" strokeWidth="2" />
          <path d="M5 11.500h17M5 17.500h17M5 23.500h12" stroke="#13668a" strokeWidth="2" />
        </svg>
      </Slot>
      <Slot>
        <span className="mt-[1px] mr-[-3px] flex h-[60px] w-[56px] items-center justify-center rounded-[5px] border border-[#383838] bg-[#2b2b2b]">
          <StarLogo className="size-9" />
        </span>
        <span className="absolute bottom-[7px] left-[21px] h-[5px] w-6 rounded-full bg-[#99c7e0]" />
      </Slot>
      <div className="ml-auto flex flex-col items-end justify-center pb-px pr-[36px] leading-[24px] text-[#dcdcdc]">
        <Fit w={76}>12:10 AM</Fit>
        <Fit w={93}>30-12-2024</Fit>
      </div>
    </div>
  );
}

export default function App() {
  return (
    <div className="flex h-[2159px] w-[3838px] flex-col overflow-hidden bg-[#3c4042] font-['Noto_Sans_CJK_SC',sans-serif]">
      <TitleBar />
      <MenuBar />
      <div className="h-[21px] shrink-0 bg-[#3c4042]" />
      <div className="flex h-[1964px] shrink-0">
        <div className="flex w-[299px] shrink-0 flex-col overflow-hidden text-[17.5px]">
          <WorkingDiagrams />
          <Toolbox />
        </div>
        <Canvas />
        <ViewStrip />
        <RightPanel />
      </div>
      <StatusBar />
      <Taskbar />
    </div>
  );
}
